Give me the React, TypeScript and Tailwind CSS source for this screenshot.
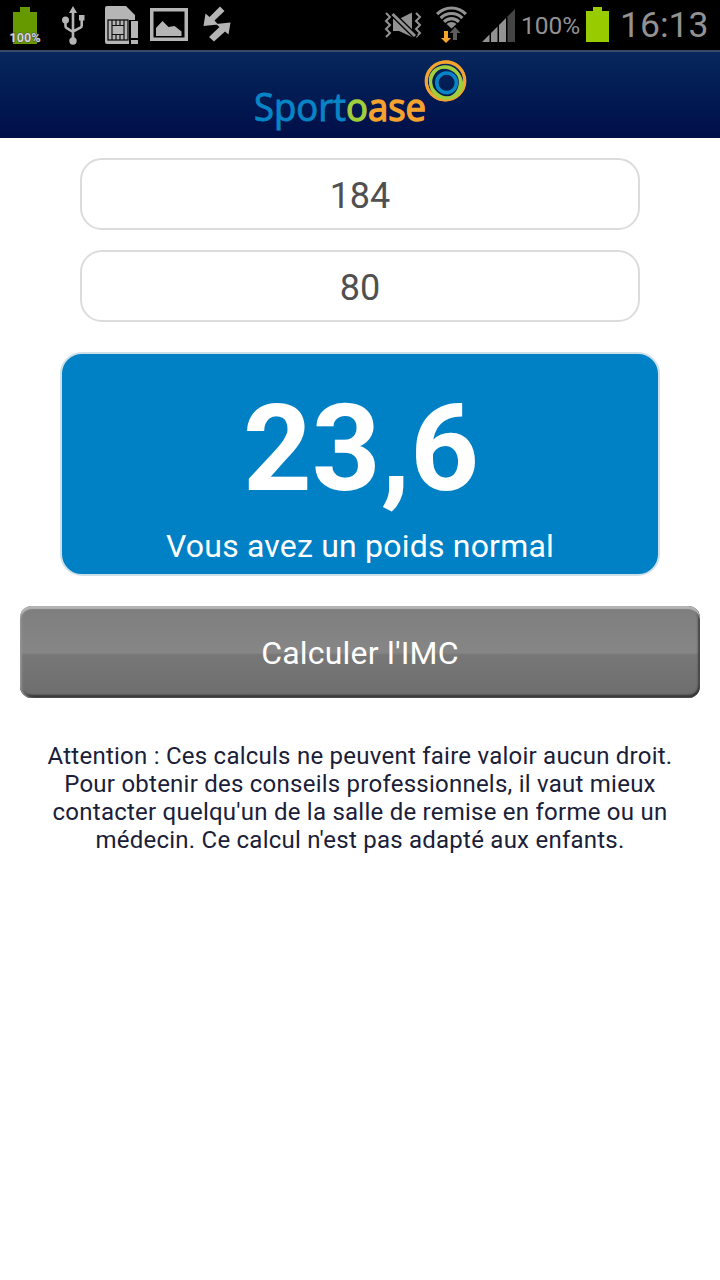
import React from "react";

const LIGHT = "#b5b5b5";
const GREY = "#929292";

function NotificationIcons() {
  return (
    <svg width="240" height="50" viewBox="0 0 240 50" fill={LIGHT}>
      <path d="M13 12h7V7h10v5h7v32H13z" fill="#669900" />
      <text x="9.5" y="42" fontSize="12" fontWeight="700" textLength="31" lengthAdjust="spacingAndGlyphs" fill="#d6d6d6" stroke="#444" strokeWidth="1" paintOrder="stroke">100%</text>
      <path d="M73 6l4 7h-8z" />
      <path d="M73 12v28M65.500 20v6q0 1.500 1.300 2.200L73 32M81.700 18v7.500q0 1.500-1.300 2.200L73 31.500" fill="none" stroke={LIGHT} strokeWidth="2.600" />
      <circle cx="65.500" cy="20" r="3.500" />
      <circle cx="73" cy="41" r="3.700" />
      <path d="M79 15h5.500v5.500H79z" />
      <path d="M107 6h19l9 9v5h-6v24h-22q-2 0-2-2V8q0-2 2-2z" />
      <rect x="108" y="20" width="20" height="20" fill="none" stroke="#111" strokeWidth="1.300" />
      <path d="M112 20v20M124 20v20M112 25.500h12M112 34.500h12M116 20v5M120 20v5M116 35v5M120 35v5" fill="none" stroke="#111" strokeWidth="1.200" />
      <path d="M131 21h7v17h-7zM131 40h7v4h-7z" />
      <path d="M150 8h38v33h-38zM153.500 11.500v26h31v-26z" fillRule="evenodd" />
      <path d="M156 36v-8l6.500-7 6 6 6-1 7 5.500V36z" />
      <path d="M220 6.500l4.500 4.500-10 9.500 3.500 4-14.500 1.500 2-12.500 4 3.500zM230.500 22.500l-2 12-3.500-3-11 10-5-4.500L219.500 27l-3.500-3z" />
    </svg>
  );
}

function ConnectionIcons() {
  return (
    <svg width="142" height="50" viewBox="378 0 142 50" fill={GREY}>
      <path d="M386 13l4 4-4 4 4 4-4 4 4 4-4 4M416 13l4 4-4 4 4 4-4 4 4 4-4 4" fill="none" stroke={GREY} strokeWidth="2" />
      <path d="M393 19h6l13-6.500V37L399 31h-6z" />
      <path d="M391 12.500L416 37" stroke="#000" strokeWidth="5.500" />
      <path d="M392.500 14L415 36" stroke={GREY} strokeWidth="3" />
      <g fill="none" stroke={GREY} strokeWidth="3.200">
        <path d="M437.100 14.100A20 20 0 0 1 465.900 14.100M440.700 18.100A15 15 0 0 1 462.300 18.100M444.100 21.800A10.300 10.300 0 0 1 458.900 21.800" />
      </g>
      <path d="M446.500 24a7 7 0 0 1 10 0l-5 4.500z" />
      <path d="M444 31h4v7h3l-5 5-5-5h3z" fill="#f5a32a" />
      <path d="M455 27l5.500 6H457v7h-4v-7h-3.500z" fill="#5c5c5c" />
      <path d="M482 42l7.500-7.500V42zM491 33l6.500-6.500V42H491zM499 25l7-7v24h-7z" />
      <path d="M507.500 16.500L515 9v33h-7.500z" fill="#444" />
    </svg>
  );
}

function StatusBar() {
  return (
    <div className="flex h-[50px] items-start justify-between bg-black">
      <NotificationIcons />
      <div className="flex h-[50px] items-center">
        <ConnectionIcons />
        <span className="w-[60px] pt-[2px] pl-px text-[24.500px] leading-[30px] whitespace-nowrap text-[#929292]">100%</span>
        <svg width="36" height="50" viewBox="580 0 36 50">
          <path d="M586 11h7V7h9v4h7v31h-23z" fill="#99cc00" />
        </svg>
        <span className="w-[104px] pl-[4px] text-[35.500px] leading-[50px] whitespace-nowrap text-[#929292]">16:13</span>
      </div>
    </div>
  );
}

function Logo() {
  return (
    <svg width="240" height="86" viewBox="240 52 240 86" className="font-['Open_Sans',sans-serif]">
      <text x="254" y="121" fontSize="37.500" textLength="172" lengthAdjust="spacingAndGlyphs">
        <tspan fill="#0785c7" stroke="#0785c7" strokeWidth=".9">Sport</tspan>
        <tspan fill="#a1ce3c" stroke="#a1ce3c" strokeWidth="1.300">o</tspan>
        <tspan fill="#f5a32f" stroke="#f5a32f" strokeWidth="1.400">ase</tspan>
      </text>
      <g fill="none">
        <ellipse cx="445.500" cy="81" rx="19.300" ry="18.800" stroke="#f5a32f" strokeWidth="3.200" />
        <ellipse cx="445.500" cy="80.800" rx="18.700" ry="19.500" transform="rotate(35 445.500 80.800)" stroke="#f5a32f" strokeWidth="2.500" />
        <ellipse cx="445.500" cy="82.500" rx="14.800" ry="15.800" stroke="#a1ce3c" strokeWidth="3" />
        <ellipse cx="446" cy="82.500" rx="16.500" ry="14.500" transform="rotate(40 446 82.500)" stroke="#a1ce3c" strokeWidth="3" />
        <circle cx="446.600" cy="82.800" r="9.800" stroke="#0785c7" strokeWidth="3.600" />
      </g>
    </svg>
  );
}

function Field({ value }: { value: string }) {
  return (
    <div className="flex h-[72px] w-[560px] items-center justify-center rounded-[22px] border-2 border-[#dcdcdc] pt-1 text-[36px] text-[#505050]">
      {value}
    </div>
  );
}

const NOTICE = [
  "Attention : Ces calculs ne peuvent faire valoir aucun droit.",
  "Pour obtenir des conseils professionnels, il vaut mieux",
  "contacter quelqu'un de la salle de remise en forme ou un",
  "médecin. Ce calcul n'est pas adapté aux enfants.",
];

export default function App() {
  return (
    <div className="flex h-[1280px] w-[720px] flex-col bg-white font-[Roboto,sans-serif]">
      <StatusBar />
      <header className="flex h-[88px] justify-center border-t-2 border-[#384b66] bg-linear-to-b from-[#07275d] to-[#010e48]">
        <Logo />
      </header>
      <main className="flex flex-col items-center pt-5">
        <div className="flex flex-col gap-5">
          <Field value="184" />
          <Field value="80" />
        </div>
        <section className="mt-[30px] flex h-[224px] w-[600px] flex-col items-center rounded-[22px] border-2 border-[#cfe0e8] bg-[#0081c6] text-white">
          <div className="mt-[23px] pl-[2px] text-[120px] leading-[144px] font-bold">23,6</div>
          <div className="mt-[5px] text-[32px] leading-[40px] tracking-[0.2px]">Vous avez un poids normal</div>
        </section>
        <button className="mt-[30px] flex h-[92px] w-[680px] items-center justify-center rounded-[12px] bg-[linear-gradient(#7e7e7e,#868686_51%,#777_53%,#6d6d6d)] pt-px text-[32px] tracking-[0.2px] text-white shadow-[inset_0_3px_1px_#b4b4b4,inset_2px_0_2px_#929292,inset_0_-3px_2px_#333,inset_-2px_0_2px_#444]">
          Calculer l'IMC
        </button>
        <p className="mt-11 text-center text-[24px] leading-[28px] tracking-[0.24px] text-[#1a2038]">
          {NOTICE.map((line) => (
            <span key={line} className="block whitespace-nowrap">{line}</span>
          ))}
        </p>
      </main>
    </div>
  );
}
